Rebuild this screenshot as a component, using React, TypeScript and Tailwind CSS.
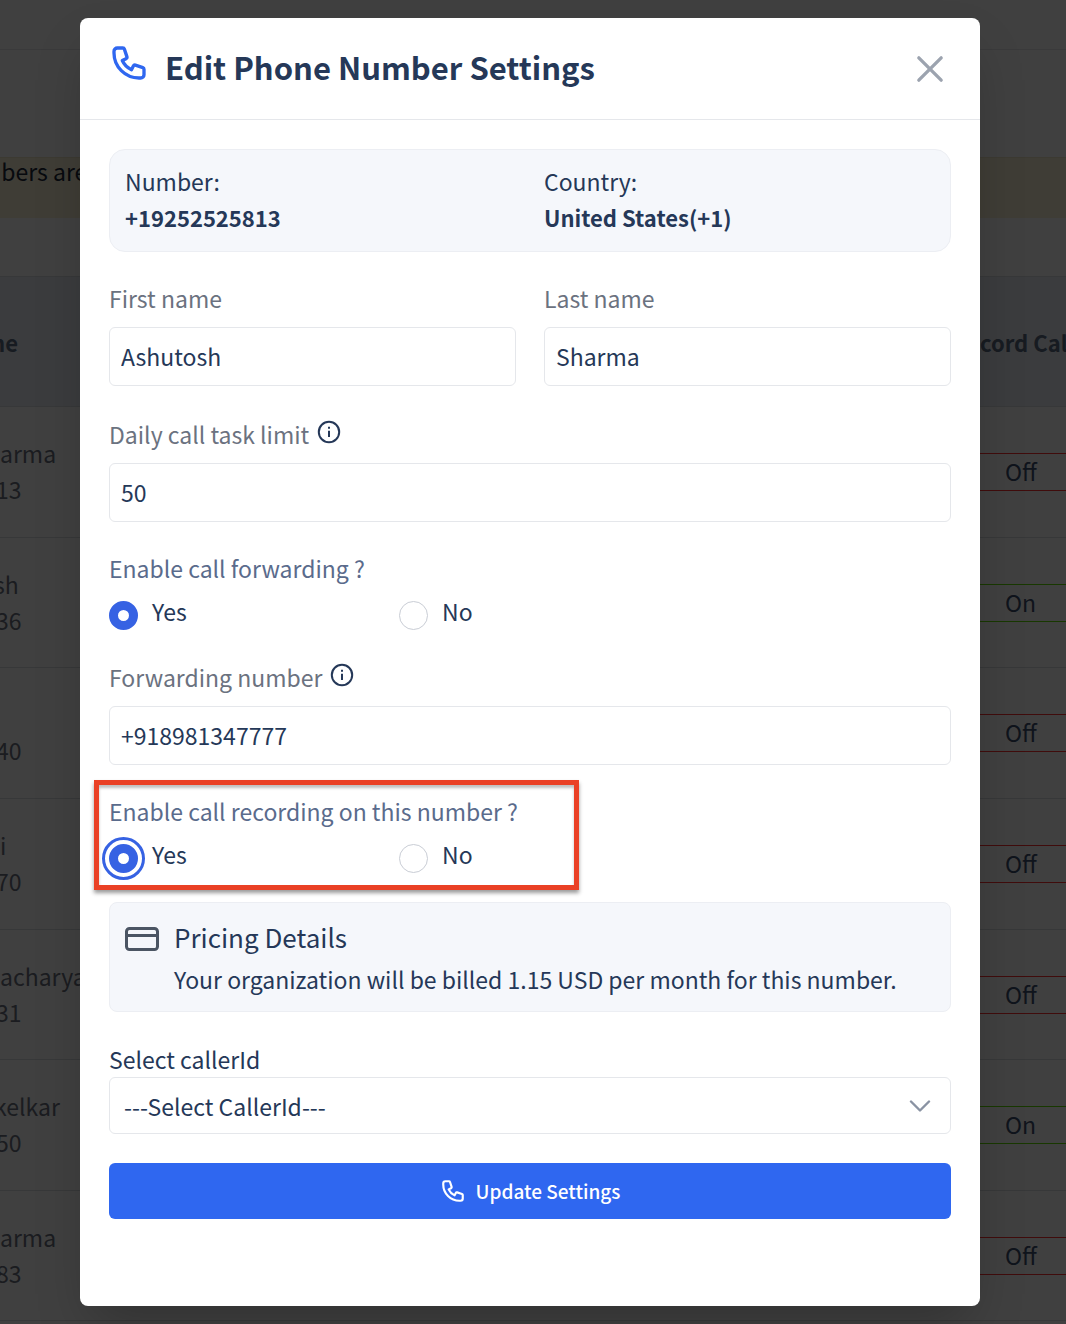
import React from "react";

const rows = [
  { name: "arma", num: "13", on: false, h: "h-[131px]", shift: "" },
  { name: "sh", num: "36", on: true, h: "h-[130px]", shift: "-ml-1.5" },
  { name: "", num: "40", on: false, h: "h-[131px]", shift: "" },
  { name: "i", num: "70", on: false, h: "h-[131px]", shift: "" },
  { name: "acharya", num: "31", on: false, h: "h-[130px]", shift: "" },
  { name: "kelkar", num: "50", on: true, h: "h-[131px]", shift: "-ml-1.5" },
  { name: "arma", num: "83", on: false, h: "h-[130px]", shift: "" },
];

function PhoneIcon({ className }: { className: string }) {
  return (
    <svg className={className} viewBox="0 0 24 24" fill="none" stroke="currentColor" strokeWidth="2" strokeLinecap="round" strokeLinejoin="round" aria-hidden="true">
      <path d="M3 5a2 2 0 012-2h3.28a1 1 0 01.948.684l1.498 4.493a1 1 0 01-.502 1.21l-2.257 1.13a11.042 11.042 0 005.516 5.516l1.13-2.257a1 1 0 011.21-.502l4.493 1.498a1 1 0 01.684.949V19a2 2 0 01-2 2h-1C9.716 21 3 14.284 3 6V5z" />
    </svg>
  );
}

function InfoIcon() {
  return (
    <svg className="mb-1 size-6 text-[#253858]" viewBox="0 0 24 24" fill="none" stroke="currentColor" strokeWidth="2" aria-hidden="true">
      <circle cx="12" cy="12" r="10.2" />
      <path d="M12 10.8v6.2M12 6.8v2" />
    </svg>
  );
}

function Field({ id, label, value, info }: { id: string; label: string; value: string; info?: boolean }) {
  return (
    <div className="flex flex-col gap-[11px]">
      <div className="flex h-9 items-center gap-2">
        <label htmlFor={id} className="text-[#6b7280]">{label}</label>
        {info && <InfoIcon />}
      </div>
      <input id={id} defaultValue={value} className="h-[59px] w-full rounded-md border border-[#e5e7eb] bg-white px-[11px] pb-0.5 text-[#253858] outline-none" />
    </div>
  );
}

function Choice({ name, label, checked, ring }: { name: string; label: string; checked?: boolean; ring?: boolean }) {
  return (
    <label className="flex w-[290px] items-center gap-[14px]">
      <input
        type="radio"
        name={name}
        defaultChecked={checked}
        className={
          "mt-2 size-[29px] shrink-0 appearance-none rounded-full border border-[#c9cdd5] bg-white checked:border-[9px] checked:border-[#3662e3] " +
          (ring ? "outline-[3px] outline-offset-[4px] outline-[#3662e3]" : "")
        }
      />
      {label}
    </label>
  );
}

function Choices({ name, legend, ring }: { name: string; legend: string; ring?: boolean }) {
  return (
    <fieldset>
      <legend className="h-9 text-[#5a6b8c]">{legend}</legend>
      <div className="flex h-[50px] items-center">
        <Choice name={name} label="Yes" checked ring={ring} />
        <Choice name={name} label="No" />
      </div>
    </fieldset>
  );
}

function Backdrop() {
  return (
    <div className="absolute inset-0 overflow-hidden bg-white text-[#3f5170]" aria-hidden="true">
      <div className="h-[50px] border-b border-[#e5e7eb]" />
      <div className="mt-[107px] h-[61px] overflow-hidden border-t border-[#eee6c8] bg-[#faf3d8]">
        <p className="-ml-5 leading-[26px] text-[#1e293b]">mbers are</p>
      </div>
      <table className="mt-[58px] w-full table-fixed border-collapse text-left">
        <thead>
          <tr className="h-[130px] border-y border-[#d9dde3] bg-[#ebeff6] text-[22px] text-[#5b6b83]">
            <th className="p-0 font-bold"><p className="-ml-4">me</p></th>
            <th className="w-[86px] p-0 font-bold whitespace-nowrap">cord Call</th>
          </tr>
        </thead>
        <tbody>
          {rows.map((r, i) => (
            <tr key={i} className={"border-b border-[#d9dde3] " + r.h}>
              <td className="p-0 pb-0.5 text-[#6b7280]">
                <p className={"h-9 " + r.shift}>{r.name}</p>
                <p className="-ml-1 h-9">{r.num}</p>
              </td>
              <td className="p-0">
                <div className={"h-[38px] border-y pl-[25px] leading-[34px] " + (r.on ? "border-[#5fe000]" : "border-[#ff3030]")}>{r.on ? "On" : "Off"}</div>
              </td>
            </tr>
          ))}
        </tbody>
      </table>
    </div>
  );
}

export default function App() {
  return (
    <div className="relative min-h-screen font-['Noto_Sans_CJK_SC',sans-serif] text-[23px] leading-9 text-[#253858]">
      <Backdrop />
      <div className="relative min-h-screen bg-black/75 pt-[18px] pr-[86px] pb-[18px] pl-20">
        <div role="dialog" aria-labelledby="title" className="rounded-lg bg-white shadow-2xl">
          <header className="flex h-[102px] items-center border-b border-[#e5e7eb] pr-[30px] pl-[29px]">
            <PhoneIcon className="mr-4 mb-3 size-10 text-[#2f67f0]" />
            <h1 id="title" className="mb-1 flex-1 text-[31px] font-bold">Edit Phone Number Settings</h1>
            <button aria-label="Close" className="text-[#9ca3af]">
              <svg className="size-10" viewBox="0 0 24 24" fill="none" stroke="currentColor" strokeWidth="2" strokeLinecap="round" aria-hidden="true">
                <path d="M5.3 5.3l13.4 13.4M18.7 5.3L5.3 18.7" />
              </svg>
            </button>
          </header>

          <form className="px-[29px] pt-[29px] pb-[87px]" onSubmit={(e) => e.preventDefault()}>
            <dl className="grid grid-cols-2 rounded-2xl border border-[#eceef3] bg-[#f5f7fb] px-[15px] pt-[13px] pb-4">
              <div>
                <dt>Number:</dt>
                <dd className="text-[22px] font-bold">+19252525813</dd>
              </div>
              <div className="pl-[14px]">
                <dt>Country:</dt>
                <dd className="text-[22px] font-bold">United States(+1)</dd>
              </div>
            </dl>

            <div className="mt-7 grid grid-cols-2 gap-7">
              <Field id="first" label="First name" value="Ashutosh" />
              <Field id="last" label="Last name" value="Sharma" />
            </div>
            <div className="mt-[30px]">
              <Field id="limit" label="Daily call task limit" value="50" info />
            </div>
            <div className="mt-7">
              <Choices name="forwarding" legend="Enable call forwarding ?" />
            </div>
            <div className="mt-[23px]">
              <Field id="forward" label="Forwarding number" value="+918981347777" info />
            </div>
            <div className="relative mt-7">
              <Choices name="recording" legend="Enable call recording on this number ?" ring />
              <div className="pointer-events-none absolute -top-[13px] -left-[15px] h-[110px] w-[485px] border-[5px] border-[#ea4025] shadow-[0_3px_4px_rgba(0,0,0,0.4),inset_0_3px_3px_rgba(0,0,0,0.25)]" />
            </div>

            <section className="mt-[23px] flex gap-[15px] rounded-lg border border-[#eceef3] bg-[#f5f7fb] px-[15px] pt-4 pb-3">
              <svg className="mt-[3px] h-[34px] w-[34px] shrink-0 text-[#4b5563]" viewBox="0 0 34 34" fill="none" stroke="currentColor" strokeWidth="3" aria-hidden="true">
                <rect x="1.5" y="6.5" width="31" height="21" rx="3" />
                <path d="M1 13.5h32" />
              </svg>
              <div>
                <h2 className="h-10 text-[26px]">Pricing Details</h2>
                <p className="leading-10">Your organization will be billed 1.15 USD per month for this number.</p>
              </div>
            </section>

            <label htmlFor="caller" className="mt-[29px] block">Select callerId</label>
            <div className="relative">
              <select id="caller" className="h-[57px] w-full appearance-none rounded-md border border-[#e5e7eb] bg-white px-[14px]">
                <option>---Select CallerId---</option>
              </select>
              <svg className="pointer-events-none absolute top-[23px] right-5 h-3 w-[22px] text-[#8a93a3]" viewBox="0 0 22 12" fill="none" stroke="currentColor" strokeWidth="2.4" strokeLinecap="round" strokeLinejoin="round" aria-hidden="true">
                <path d="M2 1.5l9 9 9-9" />
              </svg>
            </div>

            <button className="mt-[29px] flex h-14 w-full items-center justify-center gap-[10px] rounded-md bg-[#2f67f0] text-[19px] font-medium text-white">
              <PhoneIcon className="size-[26px]" />
              Update Settings
            </button>
          </form>
        </div>
      </div>
    </div>
  );
}
